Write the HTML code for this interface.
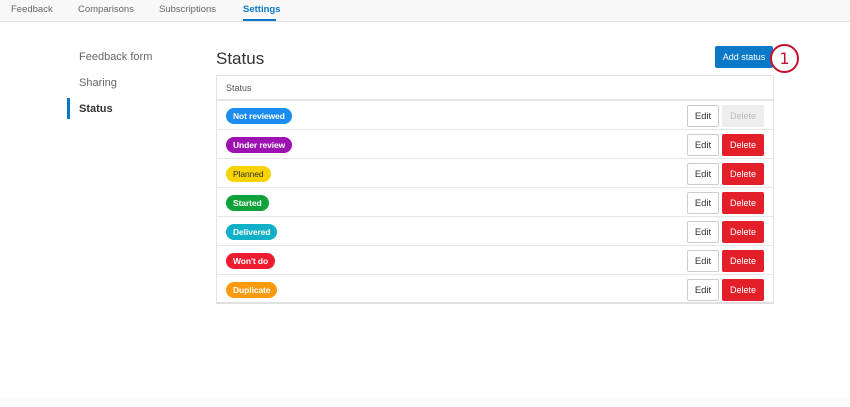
<!DOCTYPE html>
<html><head><style>
*{box-sizing:border-box;margin:0;padding:0}
body{width:850px;height:407px;background:#fff;font-family:"Liberation Sans",sans-serif;position:relative;overflow:hidden;color:#333}
.nav{position:absolute;left:0;top:0;width:850px;height:22px;background:#f8f8f8;border-bottom:1px solid #e3e3e3}
.nav span{position:absolute;top:4px;font-size:9.5px;line-height:11px;color:#666}
.nav .act{color:#0b78c8;font-weight:bold}
.ul{position:absolute;left:243px;top:19px;width:33px;height:2px;background:#0b78c8}
.side{position:absolute;left:79px;font-size:11px;line-height:13px;color:#666}
.bar{position:absolute;left:67px;top:98px;width:3px;height:21px;background:#0b78c8}
h1{position:absolute;left:216px;top:49px;font-size:17px;line-height:20px;font-weight:normal;color:#333}
.c{display:flex;align-items:center;justify-content:center}
.add{position:absolute;left:715px;top:46px;width:58px;height:22px;background:#0b78c8;color:#fff;font-size:9px;border-radius:2px}
.circ{position:absolute;left:770px;top:44px;width:29px;height:29px;border:2px solid #c8102e;border-radius:50%;background:#fff;font-family:"DejaVu Sans",sans-serif;font-size:16px;color:#c8102e}
.tbl{position:absolute;left:216px;top:75px;width:558px;height:229px;border:1px solid #e3e3e3;border-bottom:2px solid #e0e0e0}
.hd{height:25px;border-bottom:2px solid #e6e6e6;font-size:9px;line-height:24px;padding-left:9px;color:#555}
.row{height:29px;border-bottom:1px solid #e6e6e6;position:relative}
.row:last-child{border-bottom:none}
.pill{position:absolute;left:9px;top:7px;height:16px;border-radius:8px;color:#fff;font-size:8.5px;font-weight:bold;line-height:16px;padding:0 7px;letter-spacing:-0.1px}
.edit{position:absolute;left:470px;top:4px;width:32px;height:22px;border:1px solid #ccc;border-radius:2px;font-size:9.5px;color:#333;background:#fff}
.del{position:absolute;left:505px;top:4px;width:42px;height:22px;border-radius:2px;font-size:9px;color:#fff;background:#e3202a}
.dis{background:#eee;color:#bbb}
.foot{position:absolute;left:0;top:397px;width:850px;height:10px;background:#fafafa}
</style></head><body>
<div class="nav"><span style="left:11px">Feedback</span><span style="left:78px">Comparisons</span><span style="left:159px">Subscriptions</span><span class="act" style="left:243px">Settings</span></div>
<div class="ul"></div>
<div class="side" style="top:51px">Feedback form</div>
<div class="side" style="top:77px">Sharing</div>
<div class="side" style="top:103px;color:#333;font-weight:bold">Status</div>
<div class="bar"></div>
<h1>Status</h1>
<div class="add c">Add status</div>
<div class="circ c">1</div>
<div class="tbl">
<div class="hd">Status</div>
<div class="row"><span class="pill" style="background:#1a8cf0">Not reviewed</span><span class="edit c">Edit</span><span class="del c dis">Delete</span></div>
<div class="row"><span class="pill" style="background:#9b12b0">Under review</span><span class="edit c">Edit</span><span class="del c">Delete</span></div>
<div class="row"><span class="pill" style="background:#f9d300;color:#333;font-weight:normal">Planned</span><span class="edit c">Edit</span><span class="del c">Delete</span></div>
<div class="row"><span class="pill" style="background:#0fa23a">Started</span><span class="edit c">Edit</span><span class="del c">Delete</span></div>
<div class="row"><span class="pill" style="background:#0fb0c8">Delivered</span><span class="edit c">Edit</span><span class="del c">Delete</span></div>
<div class="row"><span class="pill" style="background:#ee1c2e">Won't do</span><span class="edit c">Edit</span><span class="del c">Delete</span></div>
<div class="row"><span class="pill" style="background:#fb9a0c">Duplicate</span><span class="edit c">Edit</span><span class="del c">Delete</span></div>
</div>
<div class="foot"></div>
</body></html>
